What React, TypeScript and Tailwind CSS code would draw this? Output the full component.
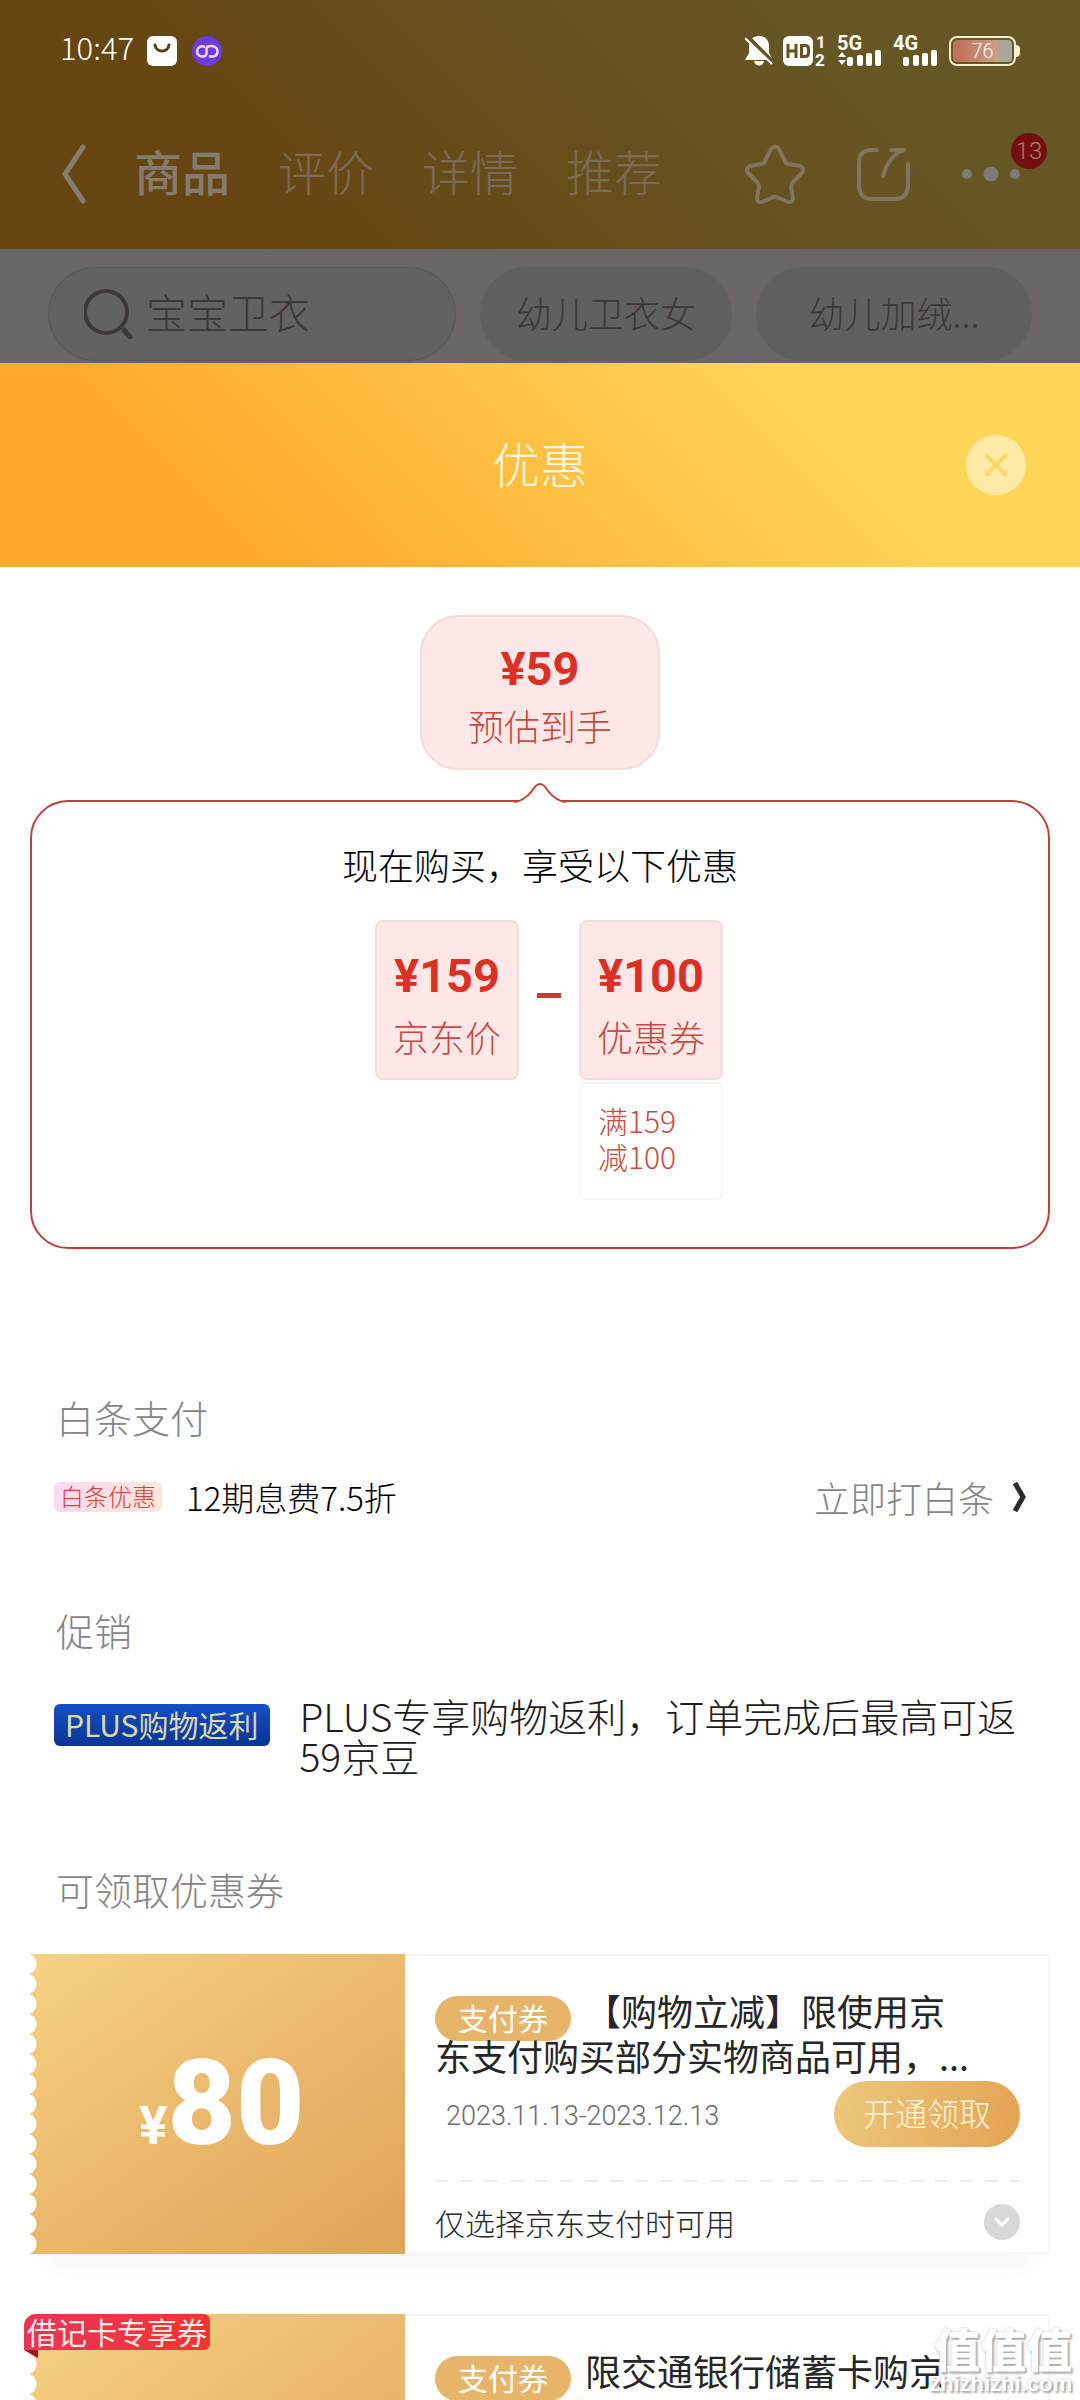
import { ChevronDown, X } from 'lucide-react'
import type { ReactNode } from 'react'

const tabs = ['商品', '评价', '详情', '推荐']

interface Coupon {
  id: number
  amount: string
  title: string
  dates?: string
  note?: string
  ribbon?: string
}

const coupons: Coupon[] = [
  {
    id: 1,
    amount: '80',
    title: '【购物立减】限使用京东支付购买部分实物商品可用，...',
    dates: '2023.11.13-2023.12.13',
    note: '仅选择京东支付时可用',
  },
  { id: 2, amount: '', title: '限交通银行储蓄卡购京', ribbon: '借记卡专享券' },
]

function SignalBars({ label, arrows }: { label: string; arrows?: boolean }) {
  return (
    <svg viewBox="0 0 46 32" className="h-8 w-[46px] overflow-visible" fill="#fff" aria-label={label}>
      <text x="0" y="16" fontSize="20" fontWeight="700" fontFamily="Roboto, sans-serif">
        {label}
      </text>
      {arrows && <path d="M1 23l4-5 4 5zM1 26h8l-4 5z" />}
      <rect x="10" y="23" width="6" height="9" rx="2" />
      <rect x="20" y="21" width="6" height="11" rx="2" />
      <rect x="29" y="19" width="6" height="13" rx="2" />
      <rect x="38" y="16" width="6" height="16" rx="2" />
    </svg>
  )
}

function StatusBar() {
  return (
    <div className="flex h-[66px] items-end px-[60px] text-white">
      <span className="mr-[17px] w-[70px] pb-[2px] text-[31px] leading-[34px] font-light">10:47</span>
      <svg viewBox="0 0 30 30" className="h-[30px] w-[30px]">
        <rect width="30" height="30" rx="6" fill="#fff" />
        <path d="M8 9c1 8 13 8 14 0" fill="none" stroke="#54401c" strokeWidth="3" strokeLinecap="round" />
      </svg>
      <svg viewBox="0 0 30 30" className="ml-[15px] h-[30px] w-[30px]">
        <circle cx="15" cy="15" r="15" fill="#6b3bdc" />
        <path
          d="M13 11C8 9 5 12 5 15.500S9 21.500 13 20 12 12 16 10.500C21 9 25.500 11 25.500 15.500S21 21.500 17 20"
          fill="none"
          stroke="#efd6ff"
          strokeWidth="2.5"
        />
      </svg>
      <div className="ml-auto flex items-end gap-[10px]">
        <svg viewBox="0 0 28 30" className="h-[30px] w-7" fill="#fff">
          <path d="M14 0c6 0 10 4 10 10v7l4 7H0l4-7v-7C4 4 8 0 14 0zM9 25h10c-1 6-9 6-10 0z" />
          <path d="M2 0l27 27" stroke="#66521f" strokeWidth="4" />
          <path d="M0 2l27 26" stroke="#fff" strokeWidth="2" />
        </svg>
        <svg viewBox="0 0 44 30" className="h-[30px] w-11 overflow-visible" fill="#fff">
          <rect width="30" height="30" rx="6" />
          <path
            d="M5 8v14M5 15h8M13 8v14M18.500 9.500H22q3.500 0 3.500 3.500v4q0 3.500-3.500 3.500h-3.500z"
            fill="none"
            stroke="#66521f"
            strokeWidth="3"
          />
          <text x="33" y="12" fontSize="17" fontWeight="700" fontFamily="Roboto, sans-serif">1</text>
          <text x="32" y="30" fontSize="17" fontWeight="700" fontFamily="Roboto, sans-serif">2</text>
        </svg>
        <SignalBars label="5G" arrows />
        <SignalBars label="4G" />
        <div className="flex items-center">
          <div className="flex h-[30px] w-[67px] rounded-lg border-2 border-[#f6efcf] p-[2px]">
            <div className="flex flex-1 items-center justify-center rounded-sm bg-linear-to-r from-[#bf7459] from-10% via-[#cf9a86] via-75% to-[#a9a798] to-78% font-['Roboto',sans-serif] text-[20px] leading-none font-light">
              76
            </div>
          </div>
          <div className="h-3 w-1 rounded-r-sm bg-[#f6efcf]" />
        </div>
      </div>
    </div>
  )
}

function NavBar() {
  return (
    <nav className="mt-[66px] flex h-[84px] items-center pl-[60px] text-[#7a6b58]">
      <button aria-label="返回">
        <svg viewBox="0 0 28 60" className="h-[60px] w-7" fill="none" stroke="#857c74" strokeWidth="5" strokeLinecap="round">
          <path d="M23 3L5 30l18 27" />
        </svg>
      </button>
      <div className="ml-[46px] flex gap-12 pb-2 text-[48px] leading-[60px]">
        {tabs.map((tab, i) => (
          <button key={tab} className={i === 0 ? 'font-medium text-[#857c70]' : 'font-light'}>
            {tab}
          </button>
        ))}
      </div>
      <div className="ml-auto flex items-center">
        <button aria-label="收藏">
          <svg viewBox="0 0 60 60" className="h-[60px] w-[60px]" fill="none" stroke="#7f7560" strokeWidth="4" strokeLinejoin="round">
            <path d="M26 5q4-5 8 0l6 12q1 3 4 3l11 2q5 2 2 7l-9 9q-2 2-2 5l2 11q0 5-5 4l-9-4q-4-2-8 0l-9 4q-5 1-5-4l2-11q0-3-2-5l-9-9q-3-5 2-7l11-2q3 0 4-3z" />
          </svg>
        </button>
        <button aria-label="分享" className="ml-[49px]">
          <svg viewBox="0 0 58 58" className="h-[58px] w-[58px]" fill="none" stroke="#7f7560" strokeWidth="4" strokeLinecap="round" strokeLinejoin="round">
            <path d="M23 5h-5Q5 5 5 18v22q0 14 13 14h22q14 0 14-14V19M37 5h13c-10 3-18 14-21 26" />
          </svg>
        </button>
        <button aria-label="更多" className="relative mr-[60px] ml-[50px]">
          <svg viewBox="0 0 58 58" className="h-[58px] w-[58px]" fill="#7d7a78">
            <circle cx="5" cy="29" r="5" />
            <circle cx="29" cy="29" r="7.500" />
            <circle cx="53" cy="29" r="5" />
          </svg>
          <span className="absolute -top-3 left-[49px] flex h-9 w-9 items-center justify-center rounded-full bg-[#740f10] font-['Roboto',sans-serif] text-[24px] leading-none font-light text-[#a08078]">
            13
          </span>
        </button>
      </div>
    </nav>
  )
}

function SearchRow() {
  return (
    <div className="flex h-[114px] gap-6 bg-[#686667] pt-[18px] pr-12 pl-12 font-light">
      <label className="flex h-[94px] w-[408px] items-center rounded-full border border-[#585656] bg-[#636262] pl-[35px]">
        <svg viewBox="0 0 50 50" className="h-[50px] w-[50px] shrink-0" fill="none" stroke="#3c3839" strokeWidth="4">
          <circle cx="22" cy="23" r="21" />
          <path d="M40 41l6 7" strokeWidth="5" strokeLinecap="round" />
        </svg>
        <input
          aria-label="搜索"
          defaultValue="宝宝卫衣"
          className="ml-3 w-full min-w-0 bg-transparent pb-1 text-[41px] text-[#3c3839] outline-none"
        />
      </label>
      <button className="h-[94px] w-[252px] rounded-full bg-[#616060] pb-1 text-[36px] text-[#3c3839]">幼儿卫衣女</button>
      <button className="h-[94px] flex-1 rounded-full bg-[#616060] pb-1 text-[36px] text-[#3c3839]">幼儿加绒...</button>
    </div>
  )
}

function PriceBox({ price, label }: { price: string; label: string }) {
  return (
    <div className="flex h-40 w-36 flex-col items-center rounded-lg border-2 border-[#f3dcda] bg-[#fee8e7] pt-[26px] text-[#c94a42]">
      <strong className="font-['Roboto',sans-serif] text-[47px] leading-[56px] font-bold text-[#dc3024]">{price}</strong>
      <span className="mt-2 text-[36px] leading-[48px] font-light">{label}</span>
    </div>
  )
}

function PriceBreakdown() {
  return (
    <section className="flex flex-col items-center px-[30px] pt-12">
      <div className="flex h-[155px] w-60 flex-col items-center rounded-[38px] border-2 border-[#f3dcda] bg-[#fee8e7] pt-6 text-[#c94a42]">
        <strong className="font-['Roboto',sans-serif] text-[47px] leading-[56px] font-bold text-[#dc3024]">¥59</strong>
        <span className="mt-1 text-[36px] leading-[48px] font-light">预估到手</span>
      </div>
      <div className="relative mt-[30px] flex h-[449px] w-full flex-col items-center rounded-[38px] border-2 border-[#c0403a] pt-[38px]">
        <svg viewBox="0 0 52 22" className="absolute -top-5 h-[22px] w-[52px]" fill="none">
          <path d="M0 22V20Q10 19 18 9 26-5 34 9 42 19 52 20v2z" fill="#fff" />
          <path d="M0 20Q10 19 18 9 26-5 34 9 42 19 52 20" stroke="#c0403a" strokeWidth="2" />
        </svg>
        <p className="text-[36px] leading-[48px] font-light text-black">现在购买，享受以下优惠</p>
        <div className="mt-8 flex items-start pl-[18px]">
          <PriceBox price="¥159" label="京东价" />
          <div className="mx-[18px] mt-[73px] h-[5px] w-6 bg-[#d0392f]" />
          <div>
            <PriceBox price="¥100" label="优惠券" />
            <p className="mt-[2px] h-[118px] w-36 rounded-md border-2 border-[#f7f5f5] pt-[18px] pl-[17px] text-[30px] leading-9 font-light text-[#c94a42]">
              满159
              <br />
              减100
            </p>
          </div>
        </div>
      </div>
    </section>
  )
}

function SectionTitle({ children }: { children: ReactNode }) {
  return <h2 className="pl-[2px] text-[38px] leading-[48px] font-light text-[#858585]">{children}</h2>
}

function CouponCard({ coupon }: { coupon: Coupon }) {
  return (
    <article className="relative flex h-[300px] shadow-[0_30px_24px_-14px_#f7f7f7]">
      <div className="relative flex w-[375px] shrink-0 items-baseline justify-center bg-linear-145 from-[#f6d284] via-[#ebb96c] to-[#dfa458] pt-[86px] pl-2 font-['Roboto',sans-serif] text-white">
        <div className="absolute inset-y-0 left-0 w-[7px] bg-[radial-gradient(circle_at_-4px_10px,#fff_10px,transparent_11px)] bg-[length:7px_20px]" />
        {coupon.amount && (
          <>
            <span className="text-[54px] leading-none font-bold">¥</span>
            <span className="text-[118px] leading-[128px] font-black">{coupon.amount}</span>
          </>
        )}
      </div>
      <div className="flex min-w-0 flex-1 flex-col border-2 border-l-0 border-[#f6f6f6] bg-white pt-8 pr-[28px] pl-[30px]">
        <h3 className="max-w-[544px] text-[36px] leading-[45px] font-normal text-[#262626]">
          <span className="mt-2 mr-[14px] -mb-2 inline-block h-[45px] rounded-full bg-[#e6b56a] px-[23px] align-top text-[30px] leading-[42px] text-white">
            支付券
          </span>
          {coupon.title}
        </h3>
        {coupon.dates && (
          <>
            <div className="mt-[3px] flex items-center justify-between">
              <time className="ml-[11px] pt-1 font-['Roboto',sans-serif] text-[27px] font-light text-[#6c6c6c]">
                {coupon.dates}
              </time>
              <button className="h-[66px] w-[186px] rounded-full bg-linear-100 from-[#ecc87c] to-[#e3a352] pb-1 text-[32px] leading-none font-light text-[#fff6dc]">
                开通领取
              </button>
            </div>
            <div className="mt-[33px] h-[2px] bg-[repeating-linear-gradient(90deg,#ececec_0_13px,transparent_13px_25px)]" />
            <div className="mt-[18px] flex items-center justify-between">
              <p className="text-[30px] leading-[44px] font-light text-[#262626]">{coupon.note}</p>
              <button aria-label="展开" className="flex h-9 w-9 items-center justify-center rounded-full bg-[#d8d8d8] text-white">
                <ChevronDown size={24} strokeWidth={3} />
              </button>
            </div>
          </>
        )}
      </div>
      {coupon.ribbon && (
        <div className="absolute top-0 -left-[6px]">
          <div className="h-9 rounded-tl-xl rounded-r-md bg-linear-to-r from-[#e73554] to-[#f5342e] px-[3px] text-[30px] leading-[34px] text-[#ffe9e6]">
            {coupon.ribbon}
          </div>
          <svg viewBox="0 0 14 8" className="h-2 w-[14px]" fill="#9c1a10">
            <path d="M0 0h14v8z" />
          </svg>
        </div>
      )}
    </article>
  )
}

function DiscountSheet() {
  return (
    <section className="bg-white">
      <header className="relative flex h-[204px] items-center justify-center bg-linear-45 from-[#ffa928] from-20% to-[#ffd556] to-76%">
        <h1 className="pb-[6px] text-[48px] leading-none font-light text-[#fff8e0]">优惠</h1>
        <button
          aria-label="关闭"
          className="absolute right-[54px] flex h-[60px] w-[60px] items-center justify-center rounded-full bg-[#ffe9a6] text-[#fbd668]"
        >
          <X size={36} strokeWidth={3} />
        </button>
      </header>
      <PriceBreakdown />
      <div className="px-[54px] pt-36">
        <SectionTitle>白条支付</SectionTitle>
        <div className="mt-8 flex items-center">
          <span className="h-[30px] rounded-md bg-linear-to-r from-[#fcd9f1] to-[#fee7dc] px-[6px] text-[24px] leading-[28px] font-light text-[#dd4038]">
            白条优惠
          </span>
          <span className="ml-6 text-[33px] leading-[48px] font-light text-black">12期息费7.5折</span>
          <a href="#baitiao" className="ml-auto flex items-center text-[36px] leading-[48px] font-light text-[#858585]">
            立即打白条
            <svg viewBox="0 0 14 30" className="ml-[18px] h-[30px] w-[14px]" fill="none" stroke="#2a2a2a" strokeWidth="5">
              <path d="M3 1l8 14-8 14" />
            </svg>
          </a>
        </div>
        <div className="mt-[85px]">
          <SectionTitle>促销</SectionTitle>
        </div>
        <div className="mt-10 flex items-start">
          <span className="mt-[10px] h-[42px] shrink-0 rounded-md bg-linear-to-b from-[#1450c4] to-[#0a3596] px-[11px] text-[30px] leading-[40px] text-[#dcd9a8]">
            PLUS购物返利
          </span>
          <p className="ml-[30px] pt-[1px] text-[39px] leading-10 font-light text-[#1c1c1c]">
            PLUS专享购物返利，订单完成后最高可返59京豆
          </p>
        </div>
        <div className="mt-[90px]">
          <SectionTitle>可领取优惠券</SectionTitle>
        </div>
      </div>
      <div className="flex flex-col gap-[60px] px-[30px] pt-[41px]">
        {coupons.map((c) => (
          <CouponCard key={c.id} coupon={c} />
        ))}
      </div>
    </section>
  )
}

export default function App() {
  return (
    <div className="relative h-screen overflow-hidden bg-white font-['Noto_Sans_CJK_SC',sans-serif]">
      <div className="h-[249px] bg-linear-45 from-[#664510] from-20% to-[#665624] to-76%">
        <StatusBar />
        <NavBar />
      </div>
      <SearchRow />
      <DiscountSheet />
      <div className="absolute right-2 bottom-1 text-right text-white [text-shadow:2px_2px_2px_#aaa,0_0_2px_#bbb]">
        <p className="text-[46px] leading-[50px] font-black">值值值</p>
        <p className="font-['Liberation_Sans',sans-serif] text-[22px] leading-6 font-bold">zhizhizhi.com</p>
      </div>
    </div>
  )
}
